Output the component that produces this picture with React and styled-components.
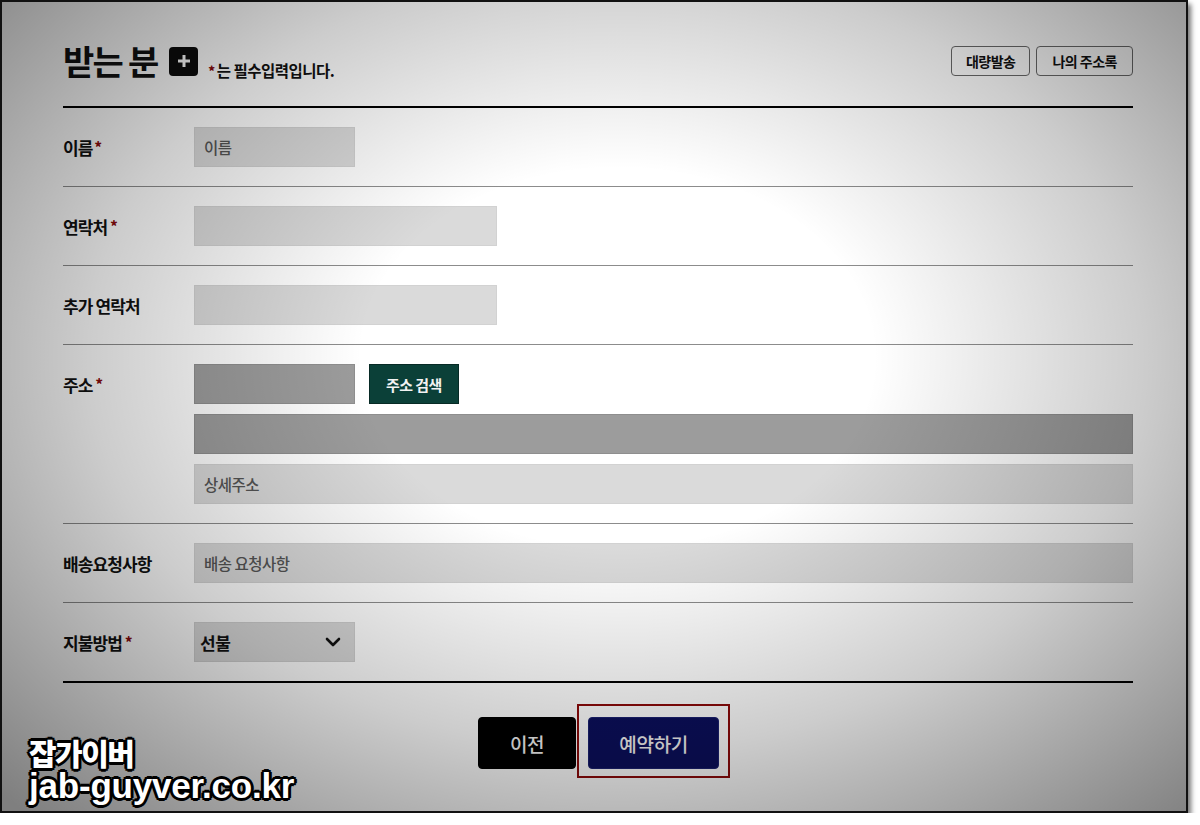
import React from 'react';
import styled, { createGlobalStyle } from 'styled-components';

const GlobalStyle = createGlobalStyle`
  html, body {
    margin: 0;
    padding: 0;
    background: #fff;
  }
  body {
    font-family: 'Noto Sans CJK KR', 'Noto Sans', sans-serif;
  }
`;

const Frame = styled.div`
  position: relative;
  box-sizing: border-box;
  width: 1188px;
  height: 813px;
  border: 2px solid #111;
  box-shadow: 3px 4px 5px rgba(0, 0, 0, 0.55);
  background: #fff;
  overflow: hidden;
  padding: 0 53px 0 61px;
`;

// dark vignette sitting over the whole shot
const Vignette = styled.div`
  position: absolute;
  inset: 0;
  pointer-events: none;
  background: radial-gradient(
    ellipse 72% 78% at 52% 44%,
    rgba(0, 0, 0, 0) 30%,
    rgba(0, 0, 0, 0.2) 62%,
    rgba(0, 0, 0, 0.5) 100%
  );
`;

const Header = styled.div`
  display: flex;
  align-items: center;
  justify-content: space-between;
  height: 90px;
  padding-top: 14px;
  border-bottom: 2px solid #000;
`;

const TitleGroup = styled.div`
  display: flex;
  align-items: center;
`;

const Title = styled.h2`
  margin: 0;
  font-size: 34px;
  font-weight: 700;
  letter-spacing: -1.8px;
  color: #111;
  line-height: 1;
`;

const PlusBox = styled.div`
  display: flex;
  align-items: center;
  justify-content: center;
  width: 29px;
  height: 29px;
  margin-left: 12px;
  border-radius: 4px;
  background: #0c0c0c;
`;

const Note = styled.span`
  align-self: flex-end;
  margin-left: 10px;
  margin-bottom: -3px;
  font-size: 15.5px;
  font-weight: 700;
  letter-spacing: -0.5px;
  color: #111;
`;

const Star = styled.span`
  color: #8a0c0c;
  font-size: ${(p) => p.size || 14}px;
  font-weight: 900;
  line-height: 1;
  margin: 0 ${(p) => p.gap || 3}px 0 ${(p) => p.lead || 0}px;
  position: relative;
  top: -1px;
`;

const HeaderButtons = styled.div`
  display: flex;
  gap: 6px;
`;

const SmallButton = styled.button`
  height: 30px;
  padding: 0 ${(p) => p.pad || 14}px;
  border: 1px solid #6a6a6a;
  border-radius: 4px;
  background: transparent;
  font-family: inherit;
  font-size: 14px;
  font-weight: 700;
  letter-spacing: -0.5px;
  color: #111;
`;

const Row = styled.div`
  display: flex;
  align-items: flex-start;
  padding: 19px 0;
  border-bottom: ${(p) => (p.last ? '2px solid #000' : '1px solid #8c8c8c')};
`;

const Label = styled.div`
  width: 131px;
  height: 40px;
  flex-shrink: 0;
  display: flex;
  align-items: center;
  font-size: 17px;
  font-weight: 700;
  letter-spacing: -0.9px;
  color: #111;
`;

const Fields = styled.div`
  display: flex;
  flex-direction: column;
  gap: 10px;
  flex: 1;
`;

const FieldLine = styled.div`
  display: flex;
  gap: 14px;
`;

const Input = styled.input`
  box-sizing: border-box;
  display: block;
  width: ${(p) => p.w || '100%'};
  height: 40px;
  padding: 0 9px;
  border: 1px solid ${(p) => (p.dark ? '#8e8e8e' : '#d2d2d2')};
  background: ${(p) => (p.dark ? '#9c9c9c' : '#dadada')};
  font-family: inherit;
  font-size: 15.5px;
  font-weight: 500;
  letter-spacing: -0.5px;
  outline: none;

  &::placeholder {
    color: #555;
  }
`;

const SearchButton = styled.button`
  height: 40px;
  padding: 0 16px;
  border: 1px solid #072a25;
  background: #0b4038;
  color: #f2f2f2;
  font-family: inherit;
  font-size: 15px;
  font-weight: 700;
  letter-spacing: -0.6px;
`;

const SelectBox = styled.div`
  box-sizing: border-box;
  display: flex;
  align-items: center;
  justify-content: space-between;
  width: 161px;
  height: 40px;
  padding: 0 13px 0 5px;
  border: 1px solid #cfcfcf;
  background: #d8d8d8;
  font-size: 17px;
  font-weight: 700;
  letter-spacing: -0.5px;
  color: #111;
`;

const Footer = styled.div`
  display: flex;
  justify-content: center;
  align-items: flex-end;
  gap: 1px;
  padding: 21px 0 0 12px;
`;

const BigButton = styled.button`
  height: 52px;
  padding: 0 ${(p) => p.pad}px;
  margin-bottom: ${(p) => (p.navy ? 0 : 9)}px;
  border: 1px solid ${(p) => (p.navy ? '#1b2170' : '#000')};
  border-radius: 4px;
  background: ${(p) => (p.navy ? '#0b0f5c' : '#000')};
  color: #f4f4f4;
  font-family: inherit;
  font-size: 19px;
  font-weight: 500;
  letter-spacing: -0.3px;
`;

const Highlight = styled.div`
  padding: 11px 9px 7px;
  border: 2px solid #8c0a0a;
`;

const Watermark = styled.div`
  position: absolute;
  left: 27px;
  bottom: 7px;
  color: #fff;
  font-weight: 900;
  text-shadow:
    -2px -2px 0 #000, 2px -2px 0 #000, -2px 2px 0 #000, 2px 2px 0 #000,
    0 -3px 0 #000, 0 3px 0 #000, -3px 0 0 #000, 3px 0 0 #000;
`;

const MarkKo = styled.div`
  font-family: 'Noto Sans CJK KR', sans-serif;
  font-size: 30px;
  line-height: 32px;
  letter-spacing: -1.5px;
`;

const MarkUrl = styled.div`
  font-family: 'Liberation Sans', Arial, sans-serif;
  font-size: 35px;
  line-height: 36px;
  font-weight: 700;
  letter-spacing: -0.2px;
`;

const Chevron = () => (
  <svg width="16" height="10" viewBox="0 0 16 10">
    <path d="M2 2 L8 8 L14 2" fill="none" stroke="#111" strokeWidth="2.6" strokeLinecap="round" strokeLinejoin="round" />
  </svg>
);

const Plus = () => (
  <svg width="14" height="14" viewBox="0 0 14 14">
    <path d="M7 1 V13 M1 7 H13" stroke="#fff" strokeWidth="3" />
  </svg>
);

export default function App() {
  return (
    <>
      <GlobalStyle />
      <Frame>
        <Header>
          <TitleGroup>
            <Title>받는 분</Title>
            <PlusBox>
              <Plus />
            </PlusBox>
            <Note>
              <Star size={13} gap={2}>*</Star>는 필수입력입니다.
            </Note>
          </TitleGroup>
          <HeaderButtons>
            <SmallButton>대량발송</SmallButton>
            <SmallButton pad={15}>나의 주소록</SmallButton>
          </HeaderButtons>
        </Header>

        <Row>
          <Label>
            이름<Star lead={2}>*</Star>
          </Label>
          <Fields>
            <Input w="161px" placeholder="이름" />
          </Fields>
        </Row>

        <Row>
          <Label>
            연락처<Star lead={3}>*</Star>
          </Label>
          <Fields>
            <Input w="303px" />
          </Fields>
        </Row>

        <Row>
          <Label>추가 연락처</Label>
          <Fields>
            <Input w="303px" />
          </Fields>
        </Row>

        <Row>
          <Label>
            주소<Star lead={3}>*</Star>
          </Label>
          <Fields>
            <FieldLine>
              <Input w="161px" dark />
              <SearchButton>주소 검색</SearchButton>
            </FieldLine>
            <Input dark />
            <Input placeholder="상세주소" />
          </Fields>
        </Row>

        <Row>
          <Label>배송요청사항</Label>
          <Fields>
            <Input placeholder="배송 요청사항" />
          </Fields>
        </Row>

        <Row last>
          <Label>
            지불방법<Star lead={3}>*</Star>
          </Label>
          <Fields>
            <SelectBox>
              <span>선불</span>
              <Chevron />
            </SelectBox>
          </Fields>
        </Row>

        <Footer>
          <BigButton pad={31}>이전</BigButton>
          <Highlight>
            <BigButton navy pad={30}>예약하기</BigButton>
          </Highlight>
        </Footer>

        <Vignette />
        <Watermark>
          <MarkKo>잡가이버</MarkKo>
          <MarkUrl>jab-guyver.co.kr</MarkUrl>
        </Watermark>
      </Frame>
    </>
  );
}
